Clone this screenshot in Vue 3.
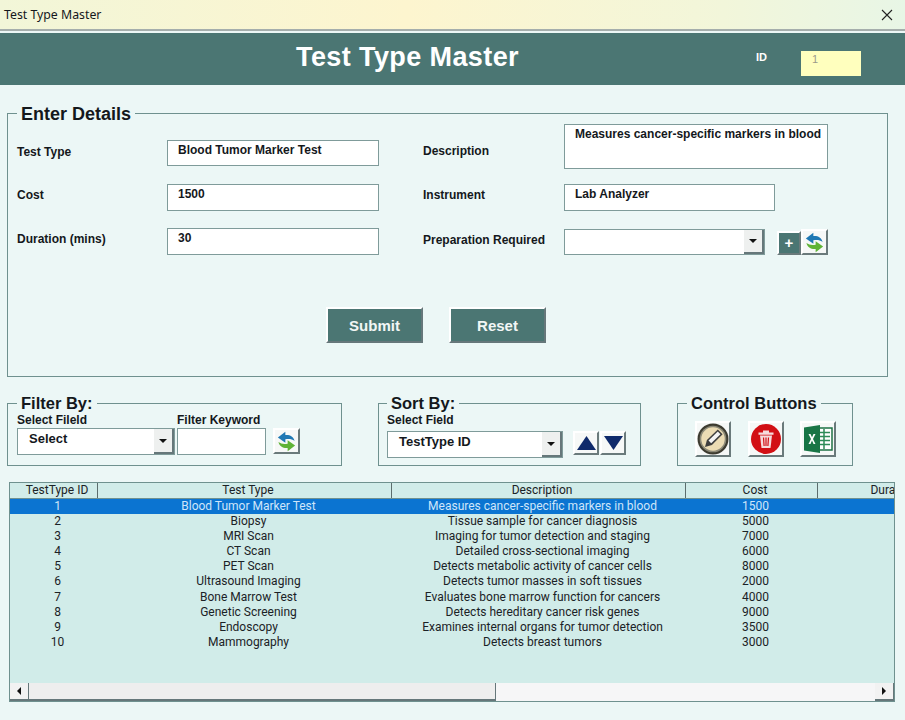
<script setup>
const rows = [
  [1, 'Blood Tumor Marker Test', 'Measures cancer-specific markers in blood', 1500],
  [2, 'Biopsy', 'Tissue sample for cancer diagnosis', 5000],
  [3, 'MRI Scan', 'Imaging for tumor detection and staging', 7000],
  [4, 'CT Scan', 'Detailed cross-sectional imaging', 6000],
  [5, 'PET Scan', 'Detects metabolic activity of cancer cells', 8000],
  [6, 'Ultrasound Imaging', 'Detects tumor masses in soft tissues', 2000],
  [7, 'Bone Marrow Test', 'Evaluates bone marrow function for cancers', 4000],
  [8, 'Genetic Screening', 'Detects hereditary cancer risk genes', 9000],
  [9, 'Endoscopy', 'Examines internal organs for tumor detection', 3500],
  [10, 'Mammography', 'Detects breast tumors', 3000]
]
const columns = ['TestType ID', 'Test Type', 'Description', 'Cost', 'Duration']
</script>

<template>
  <div class="window">
    <div class="titlebar">
      <span>Test Type Master</span>
      <svg class="close" width="12" height="12" viewBox="0 0 12 12"><path d="M1 1l10 10M11 1L1 11" stroke="#222" stroke-width="1.1" fill="none" /></svg>
    </div>

    <header class="head">
      <h1>Test Type Master</h1>
      <span class="id-label">ID</span>
      <div class="id-box">1</div>
    </header>

    <fieldset class="group details">
      <legend>Enter Details</legend>
      <div class="form">
        <div class="col col-left">
          <div class="field first"><label>Test Type</label><div class="box short">Blood Tumor Marker Test</div></div>
          <div class="field"><label>Cost</label><div class="box">1500</div></div>
          <div class="field"><label>Duration (mins)</label><div class="box">30</div></div>
        </div>
        <div class="col col-right">
          <div class="field tall"><label>Description</label><div class="box desc">Measures cancer-specific markers in blood</div></div>
          <div class="field"><label>Instrument</label><div class="box instrument">Lab Analyzer</div></div>
          <div class="field">
            <label>Preparation Required</label>
            <div class="box combo prep"><span></span><i class="drop"><b></b></i></div>
            <button class="tool plus">+</button>
            <button class="tool refresh-btn">
              <svg width="23" height="23" viewBox="0 0 20 20"><path d="M2.500 6.500 9 1.500v2.800c3.800-.4 7 1.200 8 5.200-2.200-1.600-4.800-2-8-1.400v3z" fill="#1f78b4" /><path d="M17.500 13.500 11 18.500v-2.800c-3.800.4-7-1.200-8-5.200 2.200 1.600 4.800 2 8 1.400v-3z" fill="#5fb336" /></svg>
            </button>
          </div>
        </div>
      </div>
      <div class="actions">
        <button class="action">Submit</button>
        <button class="action">Reset</button>
      </div>
    </fieldset>

    <div class="tools">
      <fieldset class="group filter">
        <legend>Filter By:</legend>
        <div class="stack">
          <label>Select Fileld</label>
          <div class="box combo filter-select">Select<i class="drop"><b></b></i></div>
        </div>
        <div class="stack">
          <label>Filter Keyword</label>
          <div class="box keyword"></div>
        </div>
        <button class="tool refresh-btn big">
          <svg width="23" height="23" viewBox="0 0 20 20"><path d="M2.500 6.500 9 1.500v2.800c3.800-.4 7 1.200 8 5.200-2.200-1.600-4.800-2-8-1.400v3z" fill="#1f78b4" /><path d="M17.500 13.500 11 18.500v-2.800c-3.800.4-7-1.200-8-5.200 2.200 1.600 4.800 2 8 1.400v-3z" fill="#5fb336" /></svg>
        </button>
      </fieldset>

      <fieldset class="group sort">
        <legend>Sort By:</legend>
        <div class="stack">
          <label>Select Field</label>
          <div class="box combo sort-select">TestType ID<i class="drop"><b></b></i></div>
        </div>
        <div class="arrows">
          <button class="tool arrow"><svg width="19" height="14" viewBox="0 0 19 14"><path d="M9.500 0 19 14H0z" fill="#0f2a6b" /></svg></button>
          <button class="tool arrow"><svg width="19" height="14" viewBox="0 0 19 14"><path d="M0 0h19L9.500 14z" fill="#0f2a6b" /></svg></button>
        </div>
      </fieldset>

      <fieldset class="group control">
        <legend>Control Buttons</legend>
        <button class="tool ctl">
          <svg width="32" height="32" viewBox="0 0 30 30">
            <circle cx="15" cy="15" r="14.500" fill="#3d3b30" />
            <circle cx="15" cy="15" r="12.500" fill="#8d8a78" />
            <circle cx="15" cy="15" r="11" fill="#ecdcb4" />
            <path d="M7.500 22.500l1.800-6.500L19.500 6l4.500 4.500L14 20.700z" fill="#3f3f3e" />
            <path d="M10.800 16.500l8.700-8.500 2.500 2.500-8.700 8.500z" fill="#f4f4f4" />
          </svg>
        </button>
        <button class="tool ctl">
          <svg width="30" height="30" viewBox="0 0 30 30">
            <circle cx="15" cy="15" r="15" fill="#d20f14" />
            <path d="M7.500 8.500h15v2.200h-15zM12 6.500h6v2h-6z" fill="#f6dcdc" />
            <path d="M9 11.500h12l-1.500 12.500h-9z" fill="#f6dcdc" />
            <path d="M12.500 13.500l.6 8.500M15 13.500v8.500M17.500 13.500l-.6 8.500" stroke="#d20f14" stroke-width="1.200" />
          </svg>
        </button>
        <button class="tool ctl">
          <svg width="32" height="32" viewBox="0 0 32 32">
            <path d="M12 5h18v22H12z" fill="#fff" stroke="#1f7246" stroke-width="1.500" />
            <path d="M18 9.500h10M18 13.500h10M18 17.500h10M18 21.500h10M22 6v20" stroke="#2e8b57" stroke-width="1.500" />
            <path d="M2 4.500 18 2v28L2 27.500z" fill="#1a7546" />
            <path d="M6.500 11l2.500 5-2.500 5h2l1.500-3.400 1.500 3.400h2l-2.500-5 2.500-5h-2L10 14.300 8.500 11z" fill="#fff" />
          </svg>
        </button>
      </fieldset>
    </div>

    <div class="grid">
      <div class="viewport">
        <div class="row header">
          <div v-for="c in columns" :key="c" class="cell">{{ c }}</div>
        </div>
        <div v-for="(r, i) in rows" :key="r[0]" class="row" :class="{ selected: i === 0 }">
          <div v-for="v in r" :key="v" class="cell">{{ v }}</div>
          <div class="cell"></div>
        </div>
      </div>
      <div class="scrollbar">
        <i class="sb-btn"><b class="left"></b></i>
        <div class="thumb"></div>
        <div class="track"></div>
        <i class="sb-btn"><b class="right"></b></i>
      </div>
    </div>
  </div>
</template>

<style scoped>
.window {
  width: 905px;
  height: 720px;
  overflow: hidden;
  background: #ecf7f6;
  color: #14181c;
  font-family: "Liberation Sans", Arial, sans-serif;
}

.titlebar {
  height: 31px;
  box-sizing: border-box;
  padding: 0 12px 0 4px;
  display: flex;
  align-items: center;
  justify-content: space-between;
  background: linear-gradient(90deg, #f2f6d8, #fdf5cf 45%, #f2f6da 80%, #e8f6e6);
  border-bottom: 2px solid #a5aeac;
  font-family: "Noto Sans", sans-serif;
  font-size: 12.300px;
}

.head {
  height: 52px;
  margin-top: 2px;
  padding-left: 296px;
  display: flex;
  align-items: flex-start;
  background: #4b7673;
  color: #fff;
}

.head h1 {
  margin: 8px 0 0;
  font-size: 27px;
  font-weight: 700;
  letter-spacing: 0.4px;
  line-height: 32px;
}

.id-label {
  margin: 18px 0 0 237px;
  font-size: 11px;
  font-weight: 700;
}

.id-box {
  width: 60px;
  height: 25px;
  margin: 18px 0 0 34px;
  box-sizing: border-box;
  padding: 2px 0 0 11px;
  background: #ffffbe;
  color: #9b9b8a;
  font-size: 11px;
}

.group {
  margin: 0;
  padding: 0;
  box-sizing: border-box;
  border: 1px solid #6f918f;
}

.group legend {
  margin-left: 9px;
  padding: 0 4px;
  font-size: 18px;
  font-weight: 700;
  line-height: 22px;
  position: relative;
  top: 1px;
}

.details {
  height: 275px;
  width: 881px;
  margin: 17px 0 0 7px;
}

.form {
  display: flex;
  padding: 0 0 0 9px;
}

.col {
  display: flex;
  flex-direction: column;
}

.col-left {
  width: 406px;
  padding-top: 16px;
  gap: 17px;
}

.col-right {
  gap: 15px;
}

.field {
  display: flex;
  align-items: center;
}

.field.first {
  margin-bottom: 1px;
}

.field label {
  width: 150px;
  padding-bottom: 5px;
}

.field.first label {
  padding-bottom: 3px;
}

.col-right .field label {
  width: 141px;
}

.field.tall label {
  padding: 9px 0 0;
}

label {
  font-size: 12px;
  font-weight: 700;
}

.box {
  position: relative;
  box-sizing: border-box;
  width: 212px;
  height: 27px;
  padding: 2px 0 0 10px;
  background: #fff;
  border: 1px solid #7f9b9a;
  font-size: 12px;
  font-weight: 700;
}

.box.short {
  height: 26px;
}

.box.desc {
  width: 264px;
  height: 45px;
}

.box.instrument {
  width: 211px;
}

.box.prep {
  width: 201px;
  height: 26px;
  margin-right: 12px;
}

.col-right .field:last-child {
  margin-top: 3px;
}

.drop {
  position: absolute;
  top: 0;
  right: 0;
  bottom: 0;
  width: 20px;
  display: flex;
  align-items: center;
  justify-content: center;
  background: #eef0ef;
  border-right: 2px solid #66777a;
  border-bottom: 2px solid #66777a;
  box-sizing: border-box;
}

.drop b {
  border-left: 4px solid transparent;
  border-right: 4px solid transparent;
  border-top: 4px solid #111;
}

.tool {
  box-sizing: border-box;
  padding: 0;
  display: flex;
  align-items: center;
  justify-content: center;
  background: #f6f8f7;
  border: none;
  border-top: 2px solid #fff;
  border-left: 2px solid #fff;
  border-right: 2px solid #6a7a7b;
  border-bottom: 2px solid #6a7a7b;
}

.plus {
  width: 24px;
  height: 24px;
  margin-top: 1px;
  background: #4b7673;
  color: #fff;
  font-family: inherit;
  font-size: 15px;
  font-weight: 700;
}

.refresh-btn {
  width: 27px;
  height: 26px;
}

.actions {
  display: flex;
  gap: 26px;
  margin: 52px 0 0 318px;
}

.action {
  width: 97px;
  height: 36px;
  box-sizing: border-box;
  padding: 0;
  background: #4b7673;
  color: #f2f6f5;
  border: none;
  border-top: 2px solid #fff;
  border-left: 2px solid #fff;
  border-right: 2px solid #66777a;
  border-bottom: 2px solid #66777a;
  font-family: inherit;
  font-size: 15px;
  font-weight: 700;
}

.tools {
  display: flex;
  align-items: flex-start;
  margin: 15px 0 0 7px;
}

.tools .group {
  height: 74px;
  display: flex;
}

.filter {
  width: 335px;
  padding: 0 0 0 9px;
}

.sort {
  width: 263px;
  margin-left: 36px;
  padding-left: 8px;
}

.control {
  width: 176px;
  margin-left: 36px;
  padding-left: 17px;
  gap: 16.500px;
}

.tools .group legend {
  margin-left: 0;
  font-size: 16.500px;
  top: 0;
}

.tools .control legend {
  margin-left: -8px;
}

.stack {
  display: flex;
  flex-direction: column;
  height: 52px;
}

.stack label {
  height: 13px;
  line-height: 13px;
}

.filter .stack {
  margin-right: 2px;
}

.filter-select {
  width: 158px;
  margin-top: 1px;
  padding-left: 11px;
}

.keyword {
  width: 89px;
  margin-top: 1px;
}

.big {
  margin: 14px 0 0 5px;
}

.sort-select {
  width: 176px;
  margin-top: 4px;
  padding-left: 11px;
}

.sort-select,
.filter-select {
  font-size: 13px;
}

.arrows {
  display: flex;
  margin: 17px 0 0 10px;
  gap: 1px;
}

.arrow {
  width: 26px;
  height: 24px;
}

.ctl {
  width: 36px;
  height: 36px;
  margin-top: 7px;
}

.grid {
  width: 886px;
  height: 220px;
  margin: 16px 0 0 9px;
  box-sizing: border-box;
  display: flex;
  flex-direction: column;
  border: 1px solid #6f918f;
  background: #d1ece9;
}

.viewport {
  flex: 1;
  overflow: hidden;
  font-family: Roboto, sans-serif;
  font-size: 12px;
}

.row {
  display: grid;
  grid-template-columns: 88px 294px 294px 132px 144px;
  width: 952px;
  height: 15.100px;
  line-height: 14px;
  color: #1b2226;
}

.row.header {
  height: 15px;
  line-height: 15px;
  border-bottom: 1px solid #6f918f;
  box-sizing: content-box;
}

.row.header .cell {
  border-right: 1px solid #5c6d6d;
}

.row.selected {
  background: #0b74d1;
  color: #cfe6fa;
}

.cell {
  padding-left: 7px;
  text-align: center;
  box-sizing: border-box;
  white-space: nowrap;
}

.scrollbar {
  height: 18px;
  display: flex;
  background: #f6f6f7;
}

.sb-btn {
  width: 19px;
  display: flex;
  align-items: center;
  justify-content: center;
  box-sizing: border-box;
  background: #f2f2f2;
  border-right: 1px solid #66777a;
  border-bottom: 2px solid #66777a;
}

.sb-btn b {
  border-top: 4px solid transparent;
  border-bottom: 4px solid transparent;
}

.sb-btn b.left {
  border-right: 4px solid #111;
}

.sb-btn b.right {
  border-left: 4px solid #111;
}

.thumb {
  width: 467px;
  box-sizing: border-box;
  background: #eeeeee;
  border-right: 1px solid #66777a;
  border-bottom: 2px solid #66777a;
}

.track {
  flex: 1;
}
</style>

<style>
html,
body {
  margin: 0;
  background: #ecf7f6;
}
</style>
